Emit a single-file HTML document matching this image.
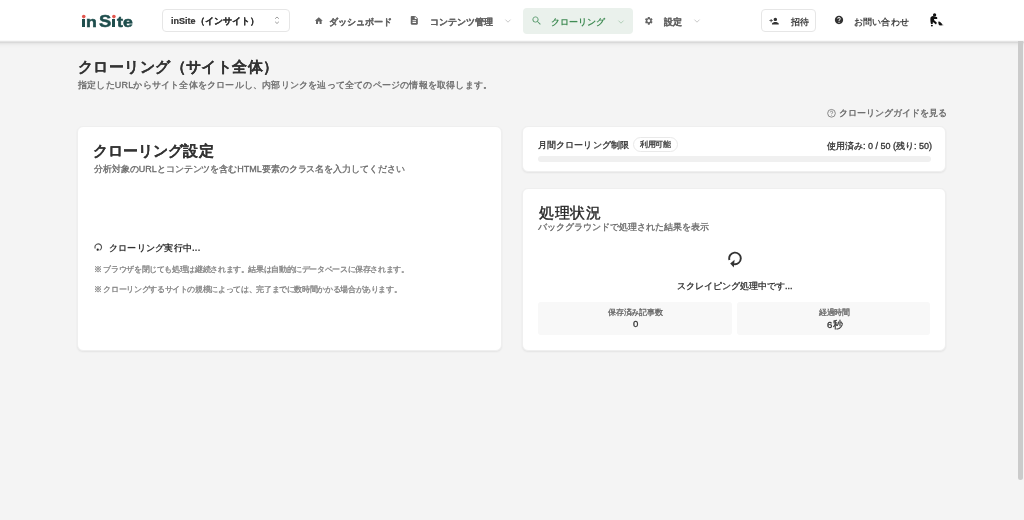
<!DOCTYPE html>
<html lang="ja">
<head>
<meta charset="utf-8">
<style>
*{box-sizing:border-box;margin:0;padding:0}
html,body{width:1024px;height:520px;overflow:hidden}
body{background:#f4f4f4;font-family:"Liberation Sans",sans-serif;color:#333;position:relative}
.a{position:absolute;white-space:nowrap}
.hdr{position:absolute;left:0;top:0;width:1024px;height:48px;background:linear-gradient(to bottom,#fff 0px,#fff 40px,#f9f9f9 40px,#f9f9f9 41px,#e4e4e4 41px,#e4e4e4 42px,#d9d9d9 42px,#d9d9d9 43px,#e6e6e6 43px,#e6e6e6 44px,#ececec 44px,#ececec 45px,#f0f0f0 45px,#f0f0f0 46px,#f2f2f2 46px,#f2f2f2 47px,#f3f3f3 47px,#f3f3f3 48px)}
.t{position:absolute;white-space:nowrap;line-height:1;will-change:transform}
.card{position:absolute;background:#fff;border:1px solid #efefef;border-radius:6px;box-shadow:0 1px 2px rgba(0,0,0,0.07)}
.lg{transform-origin:0 100%;-webkit-text-stroke:0.5px #1f4e4d}
.ic{position:absolute}
.b0{font-weight:700}
.b1{font-weight:700;-webkit-text-stroke:0.1px currentColor}
.b{font-weight:700;-webkit-text-stroke:0.2px currentColor}
.m{-webkit-text-stroke:0.3px currentColor}
.m2{-webkit-text-stroke:0.4px currentColor}
.sb{position:absolute;left:1018px;top:41px;width:5px;height:439px;background:#cbcbcb;border-radius:0 0 3px 3px}
</style>
</head>
<body>
<div class="hdr"></div>

<!-- logo -->
<div id="logo" style="position:absolute;left:0;top:0;color:#1f4e4d;font-weight:700;line-height:1">
<i style="position:absolute;left:82.1px;top:19.3px;width:3.2px;height:7.7px;background:#1f4e4d"></i>
<span class="t lg" style="left:86.2px;top:15px;font-size:14.5px;transform:scale(1.22,1)">n</span>
<span class="t lg" style="left:98.8px;top:13px;font-size:17.4px;transform:scale(1.06,1)">S</span>
<i style="position:absolute;left:112.3px;top:19.3px;width:3.2px;height:7.7px;background:#1f4e4d"></i>
<span class="t lg" style="left:116.6px;top:15px;font-size:14.5px;transform:scale(1.22,1)">t</span>
<span class="t lg" style="left:123.4px;top:15px;font-size:14.5px;transform:scale(1.22,1)">e</span>
<svg style="position:absolute;left:76px;top:10px" width="44" height="12" viewBox="0 0 44 12"><circle cx="7.75" cy="6.6" r="1.8" fill="#e2564e"/><circle cx="37.9" cy="6.6" r="1.8" fill="#e2564e"/></svg>
</div>

<!-- select -->
<div class="a" style="left:162px;top:9px;width:128px;height:23px;border:1px solid #e6e6e6;border-radius:4px;background:#fff"></div>
<div class="t b" style="left:171px;top:17px;font-size:9px;color:#333">inSite（インサイト）</div>

<!-- nav -->
<div class="t b" style="left:329px;top:18px;font-size:9px;color:#646464">ダッシュボード</div>
<div class="t b" style="left:429.8px;top:18px;font-size:9px;color:#646464">コンテンツ管理</div>
<div class="a" style="left:523px;top:8px;width:110px;height:25.7px;background:#eaf1ec;border-radius:4px"></div>
<div class="t b0" style="left:551.3px;top:18px;font-size:9px;color:#418c55">クローリング</div>
<div class="t b" style="left:664.2px;top:18px;font-size:9px;color:#646464">設定</div>

<div class="a" style="left:761px;top:9px;width:55px;height:23px;border:1px solid #e6e6e6;border-radius:4px;background:#fff"></div>
<div class="t b0" style="left:790.6px;top:18px;font-size:9px;color:#444">招待</div>
<div class="t b0" style="left:854.2px;top:18px;font-size:9px;color:#444;letter-spacing:0.15px">お問い合わせ</div>

<!-- page title -->
<div class="t b1" style="left:77.6px;top:60.3px;font-size:14.6px;color:#333;letter-spacing:0.43px">クローリング（サイト全体）</div>
<div class="t m" style="left:78px;top:80.7px;font-size:9px;color:#6a6a6a;letter-spacing:0.2px">指定したURLからサイト全体をクロールし、内部リンクを辿って全てのページの情報を取得します。</div>

<div class="t m" style="left:839.1px;top:109.4px;font-size:9.3px;color:#666">クローリングガイドを見る</div>

<!-- left card -->
<div class="card" style="left:77px;top:126px;width:425px;height:224.5px"></div>
<div class="t b1" style="left:93px;top:143.9px;font-size:14.5px;color:#333;letter-spacing:0.08px">クローリング設定</div>
<div class="t m" style="left:94px;top:165.2px;font-size:9px;color:#6a6a6a;letter-spacing:-0.04px">分析対象のURLとコンテンツを含むHTML要素のクラス名を入力してください</div>
<div class="t b0" style="left:108.7px;top:244px;font-size:9.2px;color:#333;letter-spacing:0.23px">クローリング実行中...</div>
<div class="t m" style="left:93.5px;top:266.1px;font-size:7.7px;color:#858585;letter-spacing:-0.37px">※<span style="margin-left:1.8px"></span>ブラウザを閉じても処理は継続されます。結果は自動的にデータベースに保存されます。</div>
<div class="t m" style="left:93.5px;top:286.2px;font-size:7.7px;color:#858585;letter-spacing:-0.36px">※<span style="margin-left:1.8px"></span>クローリングするサイトの規模によっては、完了までに数時間かかる場合があります。</div>

<!-- usage card -->
<div class="card" style="left:522px;top:126px;width:424px;height:46px"></div>
<div class="t m" style="left:538px;top:141.3px;font-size:9px;color:#333;letter-spacing:0.1px">月間クローリング制限</div>
<div class="a" style="left:633px;top:137px;width:45px;height:15px;border:1px solid #e9e9e9;border-radius:7.5px"></div>
<div class="t m" style="left:640px;top:141.3px;font-size:7.7px;color:#3a3a3a;letter-spacing:-0.4px">利用可能</div>
<div class="t m" style="left:826.5px;top:141.5px;font-size:9px;color:#333">使用済み: 0 / 50 (残り: 50)</div>
<div class="a" style="left:538px;top:156px;width:392.5px;height:6px;background:#f0f0f0;border-radius:3px"></div>

<!-- status card -->
<div class="card" style="left:522px;top:188px;width:424px;height:162.5px"></div>
<div class="t m2" style="left:538.6px;top:205.2px;font-size:15px;color:#2a2a2a;letter-spacing:0.6px">処理状況</div>
<div class="t m" style="left:538.3px;top:222.8px;font-size:9px;color:#6a6a6a">バックグラウンドで処理された結果を表示</div>
<div class="t m" style="left:677.4px;top:281.5px;font-size:8.9px;color:#333">スクレイピング処理中です...</div>
<div class="a" style="left:538px;top:301.5px;width:194px;height:33.5px;background:#f8f8f8;border-radius:3px"></div>
<div class="a" style="left:737px;top:301.5px;width:193px;height:33.5px;background:#f8f8f8;border-radius:3px"></div>
<div class="t m" style="left:608.3px;top:309.2px;font-size:7.7px;color:#666;letter-spacing:-0.17px">保存済み記事数</div>
<div class="t m" style="left:632.7px;top:319.2px;font-size:9.6px;color:#333">0</div>
<div class="t m" style="left:818.5px;top:309.2px;font-size:7.7px;color:#666;letter-spacing:-0.3px">経過時間</div>
<div class="t m" style="left:826.6px;top:319.5px;font-size:9.6px;color:#333;letter-spacing:0.6px">6秒</div>


<!-- icons -->
<svg class="ic" style="left:273px;top:15px" width="8" height="10" viewBox="0 0 8 10"><path d="M2.4 3.5 L4 2 L5.6 3.5 M2.4 7 L4 8.5 L5.6 7" fill="none" stroke="#8c8c8c" stroke-width="0.85" stroke-linecap="round" stroke-linejoin="round"/></svg>
<svg class="ic" style="left:313.8px;top:16px" width="9.6" height="9.6" viewBox="0 0 24 24"><path fill="#646464" d="M10 20v-6h4v6h5v-8h3L12 3 2 12h3v8z"/></svg>
<svg class="ic" style="left:409px;top:14.9px" width="10.6" height="10.6" viewBox="0 0 24 24"><path fill="#646464" d="M14 2H6c-1.1 0-1.99.9-1.99 2L4 20c0 1.1.89 2 1.99 2H18c1.1 0 2-.9 2-2V8l-6-6zm2 16H8v-2h8v2zm0-4H8v-2h8v2zm-3-5V3.5L18.5 9H13z"/></svg>
<svg class="ic" style="left:503px;top:17px" width="10" height="8" viewBox="0 0 10 8"><path d="M2.7 2.9 L5 5.2 L7.3 2.9" fill="none" stroke="#bbb" stroke-width="0.8" stroke-linecap="round" stroke-linejoin="round"/></svg>
<svg class="ic" style="left:530.9px;top:14.8px" width="11.4" height="11.4" viewBox="0 0 24 24"><path fill="#55986a" d="M15.5 14h-.79l-.28-.27C15.41 12.59 16 11.11 16 9.5 16 5.91 13.09 3 9.5 3S3 5.91 3 9.5 5.91 16 9.5 16c1.61 0 3.090-.59 4.23-1.57l.27.28v.79l5 4.99L20.49 19l-4.99-5zm-6 0C7.01 14 5 11.99 5 9.5S7.010 5 9.5 5 14 7.01 14 9.5 11.99 14 9.5 14z"/></svg>
<svg class="ic" style="left:615.5px;top:17.5px" width="10" height="8" viewBox="0 0 10 8"><path d="M2.7 2.9 L5 5.2 L7.3 2.9" fill="none" stroke="#a3c7ab" stroke-width="0.8" stroke-linecap="round" stroke-linejoin="round"/></svg>
<svg class="ic" style="left:643.8px;top:16px" width="9.6" height="9.6" viewBox="0 0 24 24"><path fill="#646464" d="M19.14 12.94c.04-.3.06-.61.06-.94 0-.32-.02-.64-.07-.94l2.03-1.58c.18-.14.23-.41.12-.61l-1.92-3.32c-.12-.22-.37-.29-.59-.22l-2.39.96c-.5-.38-1.03-.7-1.62-.94l-.36-2.54c-.04-.24-.24-.41-.48-.41h-3.84c-.24 0-.43.17-.47.41l-.36 2.54c-.59.24-1.13.57-1.62.94l-2.39-.96c-.22-.08-.47 0-.59.22L2.74 8.870c-.12.21-.08.47.12.61l2.03 1.58c-.05.3-.09.63-.09.94s.02.64.07.94l-2.03 1.58c-.18.14-.23.41-.12.61l1.92 3.32c.12.22.37.29.59.22l2.39-.96c.5.38 1.03.7 1.62.94l.36 2.54c.05.24.24.41.48.41h3.84c.24 0 .44-.17.47-.41l.36-2.54c.59-.24 1.13-.56 1.62-.94l2.39.96c.22.08.47 0 .59-.22l1.92-3.32c.12-.22.07-.47-.12-.61l-2.01-1.58zM12 15.6c-1.98 0-3.6-1.62-3.6-3.6s1.62-3.6 3.6-3.6 3.6 1.62 3.6 3.6-1.62 3.6-3.6 3.6z"/></svg>
<svg class="ic" style="left:692.2px;top:17px" width="10" height="8" viewBox="0 0 10 8"><path d="M2.7 2.9 L5 5.2 L7.3 2.9" fill="none" stroke="#bbb" stroke-width="0.8" stroke-linecap="round" stroke-linejoin="round"/></svg>
<svg class="ic" style="left:769.3px;top:15.7px" width="10.2" height="10.2" viewBox="0 0 24 24"><path fill="#333" d="M15 12c2.21 0 4-1.79 4-4s-1.79-4-4-4-4 1.79-4 4 1.79 4 4 4zm-9-2V7H4v3H1v2h3v3h2v-3h3v-2H6zm9 4c-2.67 0-8 1.34-8 4v2h16v-2c0-2.66-5.33-4-8-4z"/></svg>
<svg class="ic" style="left:833.8px;top:14.5px" width="10" height="10" viewBox="0 0 24 24"><path fill="#333" d="M12 2C6.48 2 2 6.48 2 12s4.48 10 10 10 10-4.48 10-10S17.52 2 12 2zm1 17h-2v-2h2v2zm2.07-7.75l-.9.92C13.45 12.9 13 13.5 13 15h-2v-.5c0-1.1.45-2.1 1.17-2.83l1.24-1.26c.37-.36.59-.86.59-1.41 0-1.1-.9-2-2-2s-2 .9-2 2H8c0-2.21 1.79-4 4-4s4 1.790 4 4c0 .88-.36 1.68-.93 2.25z"/></svg>
<svg class="ic" style="left:924px;top:8px" width="24" height="24" viewBox="0 0 24 24">
 <circle cx="10.6" cy="6.9" r="1.65" fill="#111"/>
 <path d="M6.4 10.4 C6.6 8.9 7.6 8.2 9 8.1 L12.6 8.9 C13.4 9.1 13.6 10.6 12.9 11 L10.2 11 L10 11.9 L12.9 14.8 L12 16.4 L8.9 13.9 L8.7 16 L7 16 C6.5 14.2 6.3 12 6.4 10.4 Z" fill="#111"/>
 <ellipse cx="7.9" cy="17.6" rx="1" ry="0.95" fill="#111"/>
 <path d="M14.4 13.8 C14.8 13.2 15.6 13.4 16.2 14 L18.4 16.3 C18.6 16.8 18 17.6 17.2 17.5 L15.2 17.2 C14.5 16.6 14.2 14.6 14.4 13.8 Z" fill="#111"/>
 <path d="M17.8 16.4 L20 17.1 L17.9 17.7 Z" fill="#999"/>
</svg>
<svg class="ic" style="left:826px;top:107.6px" width="11" height="11" viewBox="0 0 11 11"><circle cx="5.5" cy="5.3" r="3.85" fill="none" stroke="#777" stroke-width="0.85"/><path d="M4.3 4.4 C4.3 3.6 4.9 3.2 5.5 3.2 C6.2 3.2 6.7 3.7 6.7 4.3 C6.7 5.1 5.6 5.2 5.6 6.2" fill="none" stroke="#777" stroke-width="0.8"/><circle cx="5.6" cy="7.3" r="0.45" fill="#777"/></svg>
<svg class="ic" style="left:90px;top:240px" width="16" height="16" viewBox="0 0 16 16"><path d="M5.25 8.6 A3.3 3.3 0 1 1 9.6 10.2" fill="none" stroke="#555" stroke-width="1.15"/><circle cx="7.7" cy="9.7" r="1.15" fill="#222"/></svg>
<svg class="ic" style="left:722px;top:246.5px" width="26" height="26" viewBox="0 0 26 26"><path d="M7.4 12.9 A5.8 5.8 0 1 1 12 17.1" fill="none" stroke="#333" stroke-width="1.9"/><path d="M8.2 16.5 L12.6 12.8 L11.8 20.6 Z" fill="#333"/></svg>
<div class="sb"></div>
</body>
</html>
